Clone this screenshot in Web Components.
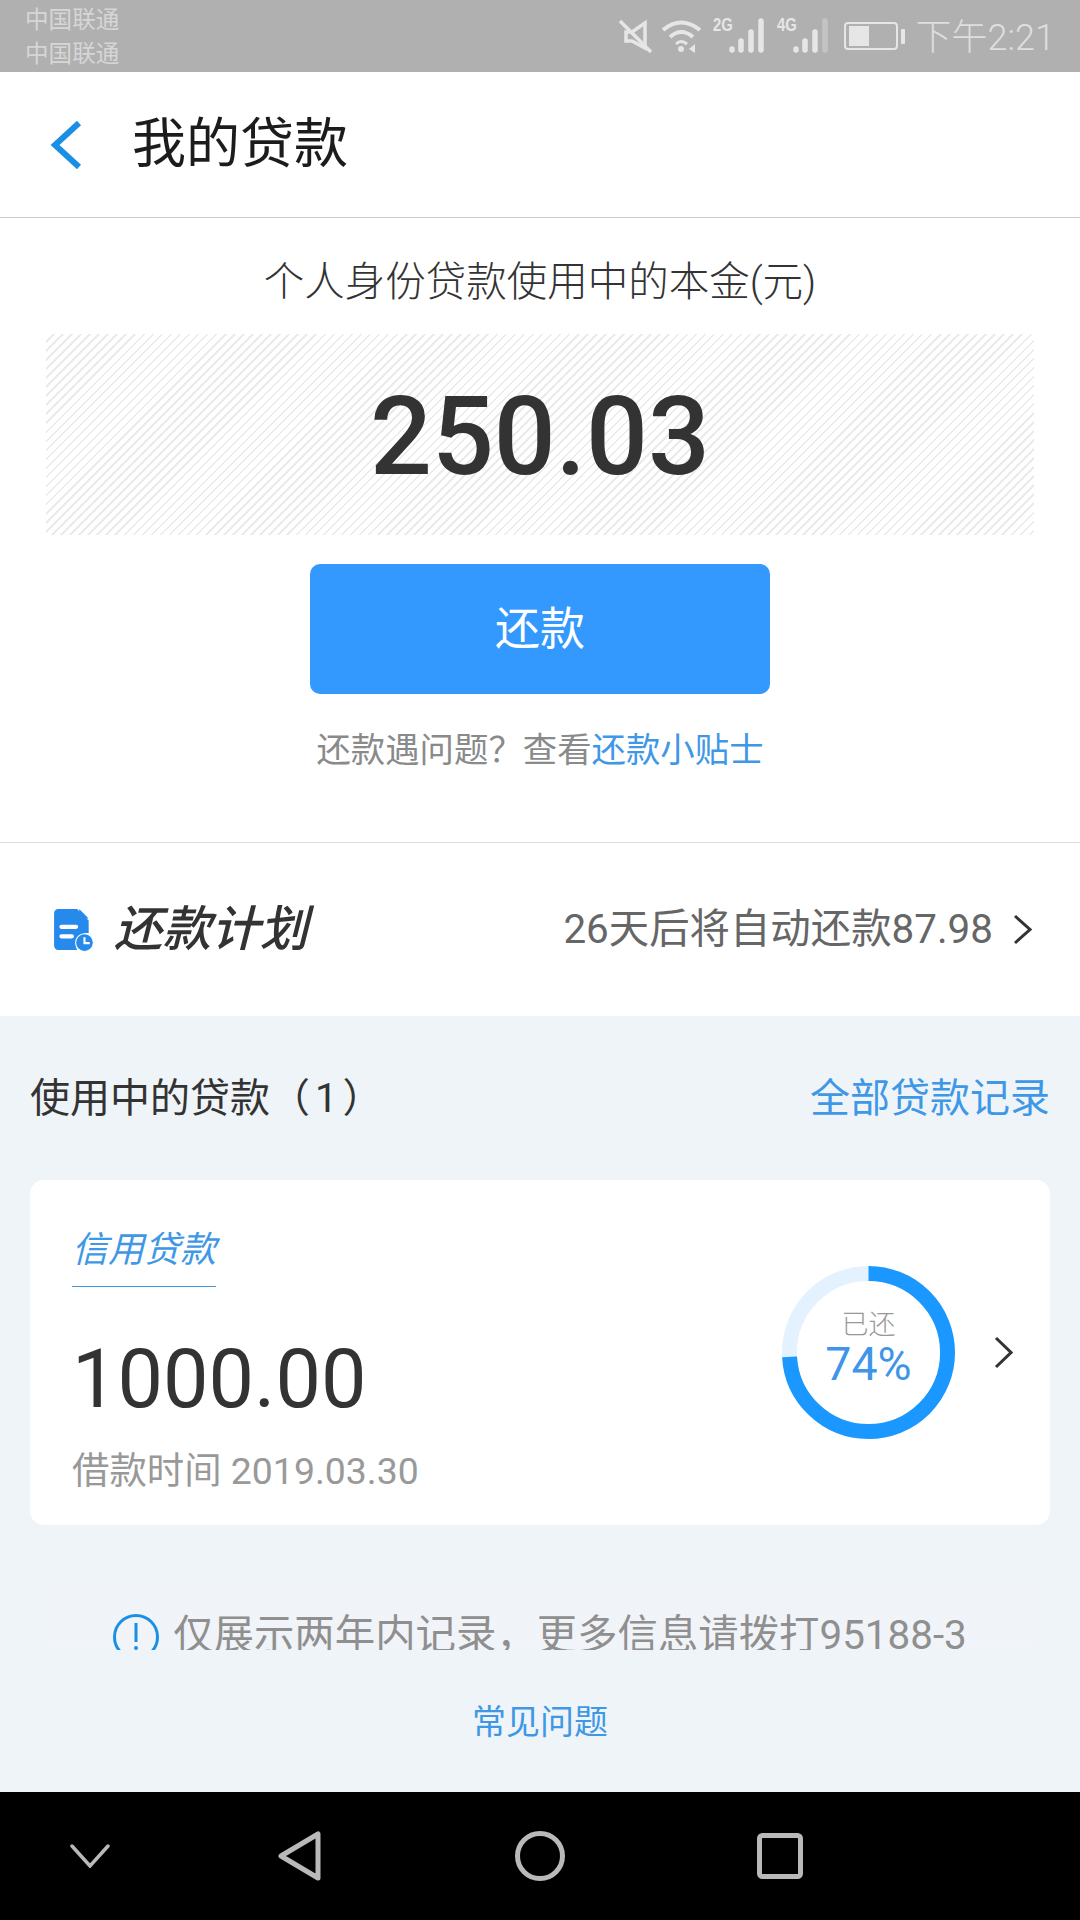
<!DOCTYPE html>
<html lang="zh"><head><meta charset="utf-8"><title>我的贷款</title>
<style>
html,body{margin:0;padding:0;width:1080px;height:1920px;overflow:hidden;background:#eff4f8}
body{font-family:Roboto,"Noto Sans CJK SC",sans-serif;display:flex;flex-direction:column}
</style></head><body>
<status-bar></status-bar>
<app-header>我的贷款</app-header>
<scroll-area>
  <principal-panel></principal-panel>
  <repay-plan></repay-plan>
  <loan-section></loan-section>
</scroll-area>
<faq-footer>常见问题</faq-footer>
<nav-bar></nav-bar>
<script>
const FONT='Roboto,"Noto Sans CJK SC",sans-serif';
const chevron=(w,h,c='#333',s=3)=>`<svg width="${w}" height="${h}" viewBox="0 0 ${w} ${h}" fill="none"><path d="M2 2 L${w-2} ${h/2} L2 ${h-2}" stroke="${c}" stroke-width="${s}"/></svg>`;
function def(name,html){customElements.define(name,class extends HTMLElement{constructor(){super();this.attachShadow({mode:'open'}).innerHTML=html}})}

def('signal-bars',`<style>:host{display:block;width:35px;height:36px}svg{display:block}</style>
<svg width="35" height="36" viewBox="0 0 35 36"><g fill="none" stroke-linecap="round" stroke-width="5.5"><path d="M3 31V32" stroke="#e6e6e6"/><path d="M12 23V32" stroke="#e6e6e6"/><path d="M22 14V32" stroke="#e6e6e6"/><path d="M32 3V32" stroke="var(--last,#e6e6e6)"/></g></svg>`);

def('status-bar',`<style>
:host{display:flex;flex:none;height:72px;background:#b0b0b0;color:#dcdcdc;justify-content:space-between;font-family:${FONT}}
.l{padding:3px 0 0 25px;font-size:23.6px;line-height:34px;color:#d6d6d6}
.r{display:flex;align-items:center;padding-right:25px}
svg{display:block}
.g{font:bold 19px "Liberation Sans Narrow","Liberation Sans",sans-serif;color:#e6e6e6;align-self:flex-start;margin-top:15px;line-height:20px;transform:scaleX(.78);width:18px;text-align:center}
.t{font-size:36px;line-height:42px;color:#dedede;font-weight:300;margin-left:10px;padding-top:3px}
</style>
<div class="l"><div>中国联通</div><div>中国联通</div></div>
<div class="r">
<svg width="34" height="34" viewBox="0 0 34 34" fill="none" stroke="#e6e6e6" stroke-width="3.5" style="margin-right:8px"><path d="M1 2 L32 33"/><path d="M26 4 L13 13 H7 V22 H13 L26 29 Z"/></svg>
<svg width="42" height="34" viewBox="0 0 42 34" fill="none" stroke="#e6e6e6" stroke-width="4" style="margin-right:8px"><path d="M2 11 Q20 -4 39 11"/><path d="M9 18 Q20 8 32 18"/><path d="M15 25 Q20 20 26 25" stroke-width="3"/><circle cx="20" cy="30" r="3" fill="#e6e6e6" stroke="none"/><path d="M28 30 L34 25 V34 Z" fill="#e6e6e6" stroke="none"/></svg>
<div class="g">2G</div><signal-bars style="margin:0 11px 0 0"></signal-bars>
<div class="g">4G</div><signal-bars style="--last:#c4c4c4;margin-right:16px"></signal-bars>
<svg width="62" height="30" viewBox="0 0 62 30" fill="none"><rect x="1" y="2" width="52" height="26" rx="3" stroke="#e6e6e6" stroke-width="2"/><rect x="5" y="5" width="20" height="20" fill="#e6e6e6"/><rect x="57" y="8" width="4" height="15" rx="1" fill="#e6e6e6"/></svg>
<div class="t">下午2:21</div>
</div>`);

def('app-header',`<style>
:host{display:flex;flex:none;align-items:center;height:145px;box-sizing:content-box;background:#fff;border-bottom:1px solid #ccc;font-family:${FONT}}
svg{margin-left:50px;display:block}
.t{margin-left:50px;font-size:54px;line-height:64px;color:#1c1c1c}
</style>
<svg width="32" height="48" viewBox="0 0 32 48" fill="none"><path d="M29 2 L5 24 L29 46" stroke="#1b8fe4" stroke-width="6"/></svg>
<div class="t"><slot></slot></div>`);

def('scroll-area',`<style>:host{display:block;height:1432px;flex:none;overflow:hidden}</style><slot></slot>`);

def('principal-panel',`<style>
:host{display:flex;flex-direction:column;align-items:center;height:625px;box-sizing:border-box;background:#fff;border-bottom:1px solid #ddd;font-family:${FONT}}
.cap{margin-top:40px;font-size:40.5px;line-height:48px;color:#333;font-weight:300}
.amt{margin-top:28px;width:988px;height:201px;box-sizing:border-box;padding-top:5px;display:flex;align-items:center;justify-content:center;font-size:109px;font-weight:500;color:#333;
background:repeating-linear-gradient(135deg,#fff 0 4.6px,#ebebeb 4.6px 6.4px)}
.btn{margin-top:29px;width:460px;height:130px;box-sizing:border-box;padding-bottom:8px;border-radius:10px;background:#3399ff;color:#fff;font-size:45px;display:flex;align-items:center;justify-content:center}
.hint{margin-top:32px;font-size:34.4px;line-height:48px;color:#8a8a8a}
.hint b{font-weight:400;color:#3f98e6}
</style>
<div class="cap">个人身份贷款使用中的本金(元)</div>
<div class="amt">250.03</div>
<div class="btn">还款</div>
<div class="hint">还款遇问题？查看<b>还款小贴士</b></div>`);

def('repay-plan',`<style>
:host{display:flex;align-items:center;height:173px;background:#fff;padding:0 48px 0 54px;font-family:${FONT}}
svg{display:block}
.n{margin-left:20px;font-size:48.5px;font-style:italic;font-weight:500;color:#333;line-height:60px}
.s{margin-left:auto;font-size:40.4px;color:#666;line-height:48px}
.c{margin-left:20px}
</style>
<svg width="40" height="44" viewBox="0 0 38 42"><path d="M4 1H22L33 12V24A11 11 0 0 0 22 40H4A4 4 0 0 1 0 36V5A4 4 0 0 1 4 1Z" fill="#2689ec"/><path d="M24 1L33 10H26A2 2 0 0 1 24 8Z" fill="#2689ec"/><path d="M7 18H21M7 27H17" stroke="#fff" stroke-width="4" stroke-linecap="round"/><circle cx="29" cy="33" r="8.5" fill="#2689ec" stroke="#fff" stroke-width="1"/><path d="M29 28V33.5H34" stroke="#fff" stroke-width="2" fill="none"/></svg>
<div class="n">还款计划</div>
<div class="s">26天后将自动还款87.98</div>
<div class="c">${chevron(19,31,'#333',3)}</div>`);

def('progress-ring',`<style>
:host{display:block;position:relative;width:173px;height:173px;font-family:${FONT}}
svg{display:block}
.a{position:absolute;left:0;right:0;top:43px;font-size:27px;line-height:32px;color:#999;text-align:center;font-weight:300}
.b{position:absolute;left:0;right:0;top:76px;font-size:46.5px;line-height:44px;color:#3f95e8;text-align:center}
</style>
<svg width="173" height="173" viewBox="0 0 174 174" fill="none"><circle cx="87" cy="87" r="79.5" stroke="#e3f2fe" stroke-width="15"/><circle cx="87" cy="87" r="79.5" stroke="#1a98ff" stroke-width="15" stroke-dasharray="369.6 500" transform="rotate(-90 87 87)"/></svg>
<div class="a">已还</div><div class="b">74%</div>`);

def('loan-card',`<style>
:host{display:flex;align-items:center;height:345px;background:#fff;border-radius:14px;padding:0 37px 0 42px;font-family:${FONT}}
.l{flex:1;display:flex;flex-direction:column;align-items:flex-start;align-self:flex-start;padding-top:48px}
.k{font-size:36px;font-style:italic;line-height:44px;color:#3f98e6;padding-bottom:14px;border-bottom:1px solid #3f98e6}
.m{margin-top:43px;font-size:81px;line-height:100px;color:#333}
.d{margin-top:19px;font-size:37.4px;line-height:44px;color:#999}
.c{margin-left:39px}
svg{display:block}
</style>
<div class="l"><div class="k">信用贷款</div><div class="m">1000.00</div><div class="d">借款时间 2019.03.30</div></div>
<progress-ring></progress-ring>
<div class="c">${chevron(19,33,'#333',3)}</div>`);

def('notice-strip',`<style>
:host{display:flex;justify-content:center;align-items:flex-start;margin:57px 16px 0;height:90px;padding-top:30px;box-sizing:content-box;background:linear-gradient(#f0f3f7,#f1f4f8);font-family:${FONT};font-size:40.4px;line-height:48px;color:#8f8f8f}
svg{display:block;margin:2px 14px 0 0}
</style>
<svg width="46" height="46" viewBox="0 0 46 46" fill="none"><circle cx="23" cy="23" r="21.5" stroke="#1b8fe4" stroke-width="3"/><path d="M23 9V28" stroke="#1b8fe4" stroke-width="3"/><circle cx="23" cy="34" r="2" fill="#1b8fe4"/></svg>
<div>仅展示两年内记录，更多信息请拨打95188-3</div>`);

def('loan-section',`<style>
:host{display:block;background:#eff4f8;padding:59px 30px 0;height:700px;font-family:${FONT}}
.h{display:flex;justify-content:space-between;font-size:40px;line-height:48px;color:#333;margin-bottom:57px}
.h b{font-weight:400;color:#3f98e6}
.n{padding:0 5px}
</style>
<div class="h"><span>使用中的贷款（<span class="n">1</span>）</span><b>全部贷款记录</b></div>
<loan-card></loan-card>
<notice-strip></notice-strip>`);

def('faq-footer',`<style>
:host{display:flex;flex:none;height:142px;box-sizing:border-box;padding-bottom:4px;align-items:center;justify-content:center;background:#eff4f8;font-family:${FONT};font-size:34px;color:#3f98e6}
</style><slot></slot>`);

def('nav-bar',`<style>
:host{display:grid;flex:none;height:128px;background:#000;grid-template-columns:180px 240px 240px 240px 180px;align-items:center;justify-items:center}
svg{display:block}
</style>
<svg width="40" height="24" viewBox="0 0 40 24" fill="none"><path d="M2 2 L20 22 L38 2" stroke="#b9b9b9" stroke-width="3.5" stroke-linecap="round"/></svg>
<svg width="44" height="50" viewBox="0 0 44 50" fill="none"><path d="M40 3 V47 L3 25 Z" stroke="#b9b9b9" stroke-width="5" stroke-linejoin="round"/></svg>
<svg width="50" height="50" viewBox="0 0 50 50" fill="none"><circle cx="25" cy="25" r="22.5" stroke="#b9b9b9" stroke-width="5"/></svg>
<svg width="46" height="46" viewBox="0 0 46 46" fill="none"><rect x="2.5" y="2.5" width="41" height="41" rx="3" stroke="#b9b9b9" stroke-width="5"/></svg>
<span></span>`);
</script>
</body></html>
